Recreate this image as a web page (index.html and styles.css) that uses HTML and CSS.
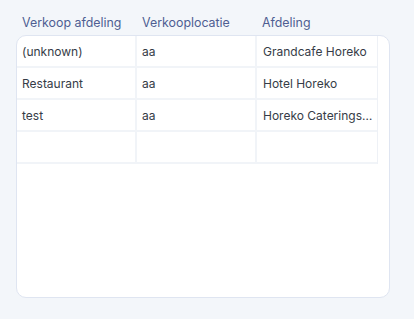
FILE: index.html
```html
<!DOCTYPE html>
<html lang="nl">
<head>
<meta charset="utf-8">
<title>Verkoop afdelingen</title>
<link rel="stylesheet" href="styles.css">
</head>
<body>
<div class="page">
  <div class="grid-head">
    <div class="head-cell">Verkoop afdeling</div>
    <div class="head-cell">Verkooplocatie</div>
    <div class="head-cell">Afdeling</div>
  </div>
  <div class="card">
    <div class="grid-body">
      <div class="row">
        <div class="cell">(unknown)</div>
        <div class="cell">aa</div>
        <div class="cell">Grandcafe Horeko</div>
      </div>
      <div class="row">
        <div class="cell">Restaurant</div>
        <div class="cell">aa</div>
        <div class="cell">Hotel Horeko</div>
      </div>
      <div class="row">
        <div class="cell">test</div>
        <div class="cell">aa</div>
        <div class="cell">Horeko Cateringservice</div>
      </div>
      <div class="row">
        <div class="cell"></div>
        <div class="cell"></div>
        <div class="cell"></div>
      </div>
    </div>
  </div>
</div>
</body>
</html>
```
FILE: styles.css
```css
html, body {
  margin: 0;
  padding: 0;
  background: #f3f6fa;
}

body {
  font-family: Inter, "Noto Sans", sans-serif;
  font-size: 12px;
  width: 414px;
  height: 319px;
  overflow: hidden;
}

.page {
  padding: 12px 0 0 16px;
  width: 374px;
}

.grid-head {
  display: flex;
  height: 23px;
}

.head-cell {
  width: 120px;
  padding-left: 6px;
  box-sizing: border-box;
  color: #4f5e92;
  font-size: 12.4px;
  line-height: 22px;
}

.card {
  background: #ffffff;
  border: 1px solid #dfe5f1;
  border-radius: 10px;
  height: 263px;
  box-sizing: border-box;
  overflow: hidden;
}

.grid-body {
  width: 360px;
  border-right: 1px solid #eef1f6;
}

.row {
  display: flex;
  height: 32px;
  border-bottom: 2px solid #f1f4f8;
  box-sizing: border-box;
}

.cell {
  width: 120px;
  padding-left: 5px;
  padding-right: 4px;
  box-sizing: border-box;
  border-right: 2px solid #f1f4f8;
  line-height: 31px;
  color: #363c47;
  white-space: nowrap;
  overflow: hidden;
  text-overflow: ellipsis;
}

.cell:last-child {
  border-right: 0;
  padding-right: 2px;
  padding-left: 6px;
}
```
